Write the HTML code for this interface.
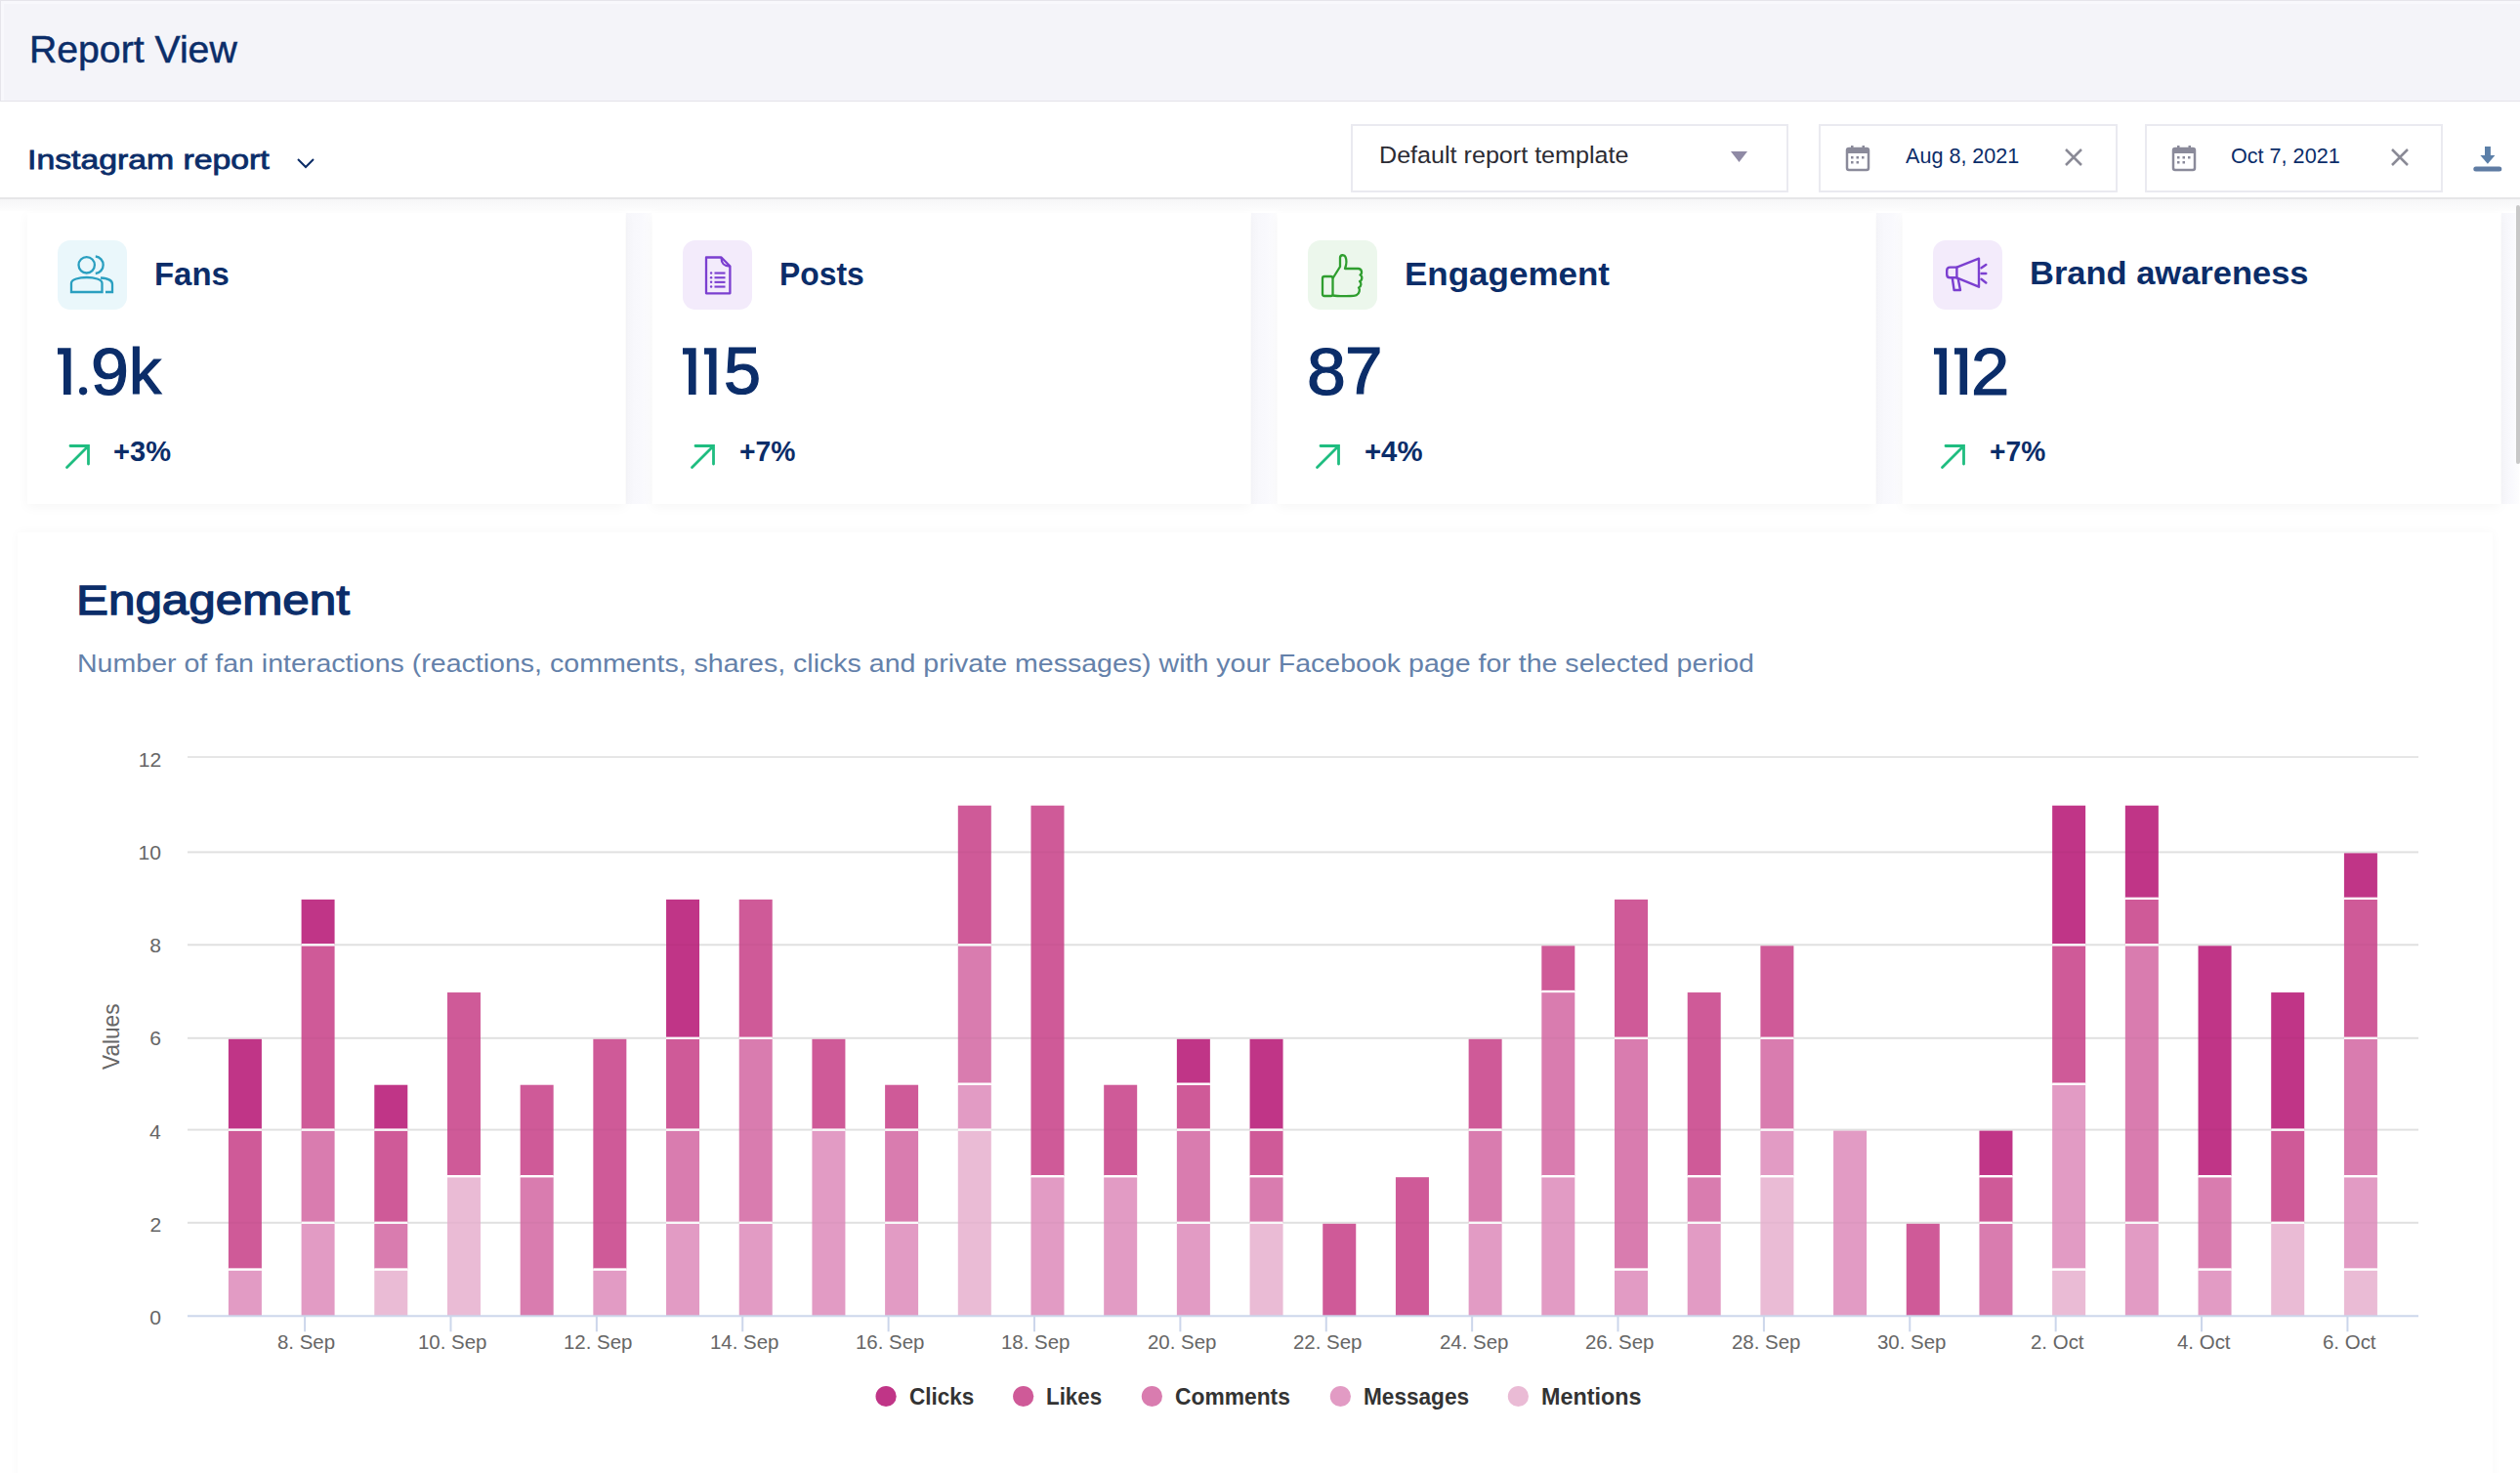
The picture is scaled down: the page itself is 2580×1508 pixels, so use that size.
<!DOCTYPE html><html><head><meta charset="utf-8"><style>
*{margin:0;padding:0;box-sizing:border-box}
html,body{width:2580px;height:1508px;overflow:hidden;background:#fff;font-family:"Liberation Sans",sans-serif}
.t{position:absolute;line-height:1;white-space:nowrap;transform-origin:0 0}
.a{position:absolute}
</style></head><body>

<div class="a" style="left:0;top:0;width:2580px;height:104px;background:#f4f4f9;border-top:1px solid #e6e5eb;border-left:1px solid #e6e5eb;border-bottom:1px solid #e4e3e9;box-shadow:inset 3px 3px 0 #f8f8fc"></div>
<div class="t" style="left:29.57px;top:32.06px;font-size:38.08px;color:#0b2d69;font-weight:400;transform:scaleX(1.0288);-webkit-text-stroke:0.5px #0b2d69;">Report View</div>

<div class="a" style="left:0;top:204px;width:2580px;height:12px;background:linear-gradient(#f6f6f7,#fdfdfd)"></div>
<div class="a" style="left:640.5px;top:218px;width:26px;height:298px;background:linear-gradient(90deg,#f7f7fb,#f9f9fd 60%,#fdfdfe)"></div>
<div class="a" style="left:1280.5px;top:218px;width:26px;height:298px;background:linear-gradient(90deg,#f7f7fb,#f9f9fd 60%,#fdfdfe)"></div>
<div class="a" style="left:1920.5px;top:218px;width:26px;height:298px;background:linear-gradient(90deg,#f7f7fb,#f9f9fd 60%,#fdfdfe)"></div>
<div class="a" style="left:2560.5px;top:218px;width:18px;height:298px;background:linear-gradient(90deg,#f7f7fb,#f9f9fd 60%,#fdfdfe)"></div>
<div class="a" style="left:0;top:202px;width:2580px;height:2px;background:#e6e6e8"></div>
<div class="t" style="left:28.06px;top:149.85px;font-size:28.05px;color:#0b2d69;font-weight:400;transform:scaleX(1.2038);-webkit-text-stroke:0.8px #0b2d69;">Instagram report</div>

<svg class="a" style="left:300px;top:158px" width="26" height="20"><path d="M5 5 L13 13 L21 5" fill="none" stroke="#0b2c66" stroke-width="2"/></svg>
<div class="a" style="left:1383px;top:127px;width:448px;height:70px;border:2px solid #eaeaf0;background:#fff"></div>
<div class="t" style="left:1411.79px;top:148.26px;font-size:23.55px;color:#2b2b33;font-weight:400;transform:scaleX(1.0666);">Default report template</div>

<svg class="a" style="left:1772px;top:155px" width="18" height="12"><path d="M0 0 L17 0 L8.5 11 Z" fill="#8f8aa5"/></svg>
<div class="a" style="left:1862px;top:127px;width:306px;height:70px;border:2px solid #eaeaf0;background:#fff"></div><svg class="a" style="left:1889px;top:148px" width="28" height="28"><rect x="2" y="4" width="22" height="22" rx="2" fill="none" stroke="#8a8a9a" stroke-width="2.5"/><rect x="2" y="4" width="22" height="5" fill="#8a8a9a"/><rect x="6" y="1" width="2.5" height="5" fill="#8a8a9a"/><rect x="17.5" y="1" width="2.5" height="5" fill="#8a8a9a"/><g fill="#8a8a9a"><rect x="6" y="12" width="2.5" height="2.5"/><rect x="11.5" y="12" width="2.5" height="2.5"/><rect x="17" y="12" width="2.5" height="2.5"/><rect x="6" y="17" width="2.5" height="2.5"/><rect x="11.5" y="17" width="2.5" height="2.5"/></g></svg><div class="t" style="left:1950.80px;top:149.09px;font-size:22.09px;color:#0b2d69;font-weight:400;transform:scaleX(0.9772);">Aug 8, 2021</div>
<svg class="a" style="left:2113px;top:151px" width="20" height="20"><path d="M2 2 L18 18 M18 2 L2 18" stroke="#8a8a96" stroke-width="2.5"/></svg>
<div class="a" style="left:2196px;top:127px;width:305px;height:70px;border:2px solid #eaeaf0;background:#fff"></div><svg class="a" style="left:2223px;top:148px" width="28" height="28"><rect x="2" y="4" width="22" height="22" rx="2" fill="none" stroke="#8a8a9a" stroke-width="2.5"/><rect x="2" y="4" width="22" height="5" fill="#8a8a9a"/><rect x="6" y="1" width="2.5" height="5" fill="#8a8a9a"/><rect x="17.5" y="1" width="2.5" height="5" fill="#8a8a9a"/><g fill="#8a8a9a"><rect x="6" y="12" width="2.5" height="2.5"/><rect x="11.5" y="12" width="2.5" height="2.5"/><rect x="17" y="12" width="2.5" height="2.5"/><rect x="6" y="17" width="2.5" height="2.5"/><rect x="11.5" y="17" width="2.5" height="2.5"/></g></svg><div class="t" style="left:2283.73px;top:149.09px;font-size:22.09px;color:#0b2d69;font-weight:400;transform:scaleX(0.9783);">Oct 7, 2021</div>
<svg class="a" style="left:2447px;top:151px" width="20" height="20"><path d="M2 2 L18 18 M18 2 L2 18" stroke="#8a8a96" stroke-width="2.5"/></svg>
<svg class="a" style="left:2530px;top:148px" width="34" height="30"><rect x="14" y="2" width="5.9" height="10" fill="#5b7fa8"/><path d="M9.4 11 L24.4 11 L16.9 19.8 Z" fill="#5b7fa8"/><rect x="2.3" y="22.4" width="29" height="5" rx="2.5" fill="#5f7ca3"/></svg>
<div class="a" style="left:27.8px;top:218px;width:612px;height:298px;background:#fff;box-shadow:0 3px 12px rgba(0,0,0,0.04)"></div>
<div class="a" style="left:58.8px;top:246px;width:71px;height:71px;border-radius:13px;background:#eaf7fb"><svg width="71" height="71" viewBox="0 0 71 71"><g fill="none" stroke="#2a9fc0" stroke-width="2.3"><circle cx="29.7" cy="25.3" r="8.2"/><path d="M38.8 16.5 A8.8 8.8 0 0 1 38.8 34"/><path d="M14 53 V44 C14 36 45.5 36 45.5 44 V53 Z"/><path d="M44 38.5 C52 39 56 41 56 45 V53 H49"/></g></svg></div>
<div class="t" style="left:157.86px;top:264.06px;font-size:32.99px;color:#0b2d69;font-weight:700;transform:scaleX(0.9976);">Fans</div>

<svg class="a" style="left:58.00px;top:355px" width="15.60" height="52"><path d="M1 1.3 H14.60 V49.1 H7.00 V7.8 H1 Z" fill="#0b2d69"/></svg>
<svg class="a" style="left:80.70px;top:395px" width="10" height="10"><circle cx="4.10" cy="5.3" r="4.1" fill="#0b2d69"/></svg>
<div class="t" style="left:92.85px;top:346.28px;font-size:68.29px;color:#0b2d69;font-weight:400;transform:scaleX(1.0235);-webkit-text-stroke:1.2px #0b2d69;">9</div>

<div class="t" style="left:132.40px;top:348.28px;font-size:65.93px;color:#0b2d69;font-weight:400;transform:scaleX(1.0042);-webkit-text-stroke:1.2px #0b2d69;">k</div>

<svg class="a" style="left:65.8px;top:453px" width="28" height="28"><path d="M2.5 25.5 L24 4 M6 3.5 H24.5 V22" fill="none" stroke="#1fbd80" stroke-width="2.8" stroke-linecap="round"/></svg>
<div class="t" style="left:115.94px;top:448.36px;font-size:29.22px;color:#0b2d69;font-weight:700;transform:scaleX(0.9946);">+3%</div>

<div class="a" style="left:667.5px;top:218px;width:612px;height:298px;background:#fff;box-shadow:0 3px 12px rgba(0,0,0,0.04)"></div>
<div class="a" style="left:698.5px;top:246px;width:71px;height:71px;border-radius:13px;background:#f3ebfb"><svg width="71" height="71" viewBox="0 0 71 71"><g fill="none" stroke="#7b3fd0" stroke-width="2.3" stroke-linejoin="round"><path d="M24 17.5 H39.5 L48.4 26.5 V54.3 H24 Z"/><path d="M39.5 17.5 C39.5 23 41 26.5 48.4 26.5"/></g><g fill="#7b3fd0"><circle cx="29.1" cy="33.5" r="1.2"/><circle cx="29.1" cy="38.2" r="1.2"/><circle cx="29.1" cy="42.8" r="1.2"/><circle cx="29.1" cy="47.5" r="1.2"/><rect x="32.5" y="32.5" width="11" height="2.1"/><rect x="32.5" y="37.2" width="11" height="2.1"/><rect x="32.5" y="41.8" width="11" height="2.1"/><rect x="32.5" y="46.5" width="11" height="2.1"/></g></svg></div>
<div class="t" style="left:798.43px;top:263.72px;font-size:33.28px;color:#0b2d69;font-weight:700;transform:scaleX(0.9570);">Posts</div>

<svg class="a" style="left:698.00px;top:355px" width="15.60" height="52"><path d="M1 1.3 H14.60 V49.1 H7.00 V7.8 H1 Z" fill="#0b2d69"/></svg>
<svg class="a" style="left:719.70px;top:355px" width="14.50" height="52"><path d="M1 1.3 H13.50 V49.1 H5.90 V7.8 H1 Z" fill="#0b2d69"/></svg>
<div class="t" style="left:740.86px;top:345.44px;font-size:69.28px;color:#0b2d69;font-weight:400;transform:scaleX(0.9877);-webkit-text-stroke:1.2px #0b2d69;">5</div>

<svg class="a" style="left:705.5px;top:453px" width="28" height="28"><path d="M2.5 25.5 L24 4 M6 3.5 H24.5 V22" fill="none" stroke="#1fbd80" stroke-width="2.8" stroke-linecap="round"/></svg>
<div class="t" style="left:756.87px;top:448.36px;font-size:29.22px;color:#0b2d69;font-weight:700;transform:scaleX(0.9685);">+7%</div>

<div class="a" style="left:1307.5px;top:218px;width:612px;height:298px;background:#fff;box-shadow:0 3px 12px rgba(0,0,0,0.04)"></div>
<div class="a" style="left:1338.5px;top:246px;width:71px;height:71px;border-radius:13px;background:#ecf7ec"><svg width="71" height="71" viewBox="0 0 71 71"><g fill="none" stroke="#2f9e2f" stroke-width="2.3" stroke-linejoin="round"><rect x="15" y="37" width="10.5" height="20" rx="2"/><path d="M25.5 39 L33 27 V18 C33 14.5 37.5 14.5 38.5 17 C40 20.5 39.5 25 38 29 H51.5 C55.5 29 56 34 53.5 35.5 C56 36.5 56 41 53 42 C55 43.5 55 47.5 52 48.5 C53.5 50 53 54.5 50 56 C48 57.5 31 57.5 25.5 56.5"/></g></svg></div>
<div class="t" style="left:1438.32px;top:263.86px;font-size:32.99px;color:#0b2d69;font-weight:700;transform:scaleX(1.0609);">Engagement</div>

<div class="t" style="left:1338.07px;top:346.28px;font-size:68.29px;color:#0b2d69;font-weight:400;transform:scaleX(1.0500);-webkit-text-stroke:1.2px #0b2d69;">8</div>

<div class="t" style="left:1376.94px;top:345.44px;font-size:69.28px;color:#0b2d69;font-weight:400;transform:scaleX(0.9994);-webkit-text-stroke:1.2px #0b2d69;">7</div>

<svg class="a" style="left:1345.5px;top:453px" width="28" height="28"><path d="M2.5 25.5 L24 4 M6 3.5 H24.5 V22" fill="none" stroke="#1fbd80" stroke-width="2.8" stroke-linecap="round"/></svg>
<div class="t" style="left:1397.13px;top:448.36px;font-size:29.22px;color:#0b2d69;font-weight:700;transform:scaleX(1.0033);">+4%</div>

<div class="a" style="left:1948.0px;top:218px;width:612px;height:298px;background:#fff;box-shadow:0 3px 12px rgba(0,0,0,0.04)"></div>
<div class="a" style="left:1979.0px;top:246px;width:71px;height:71px;border-radius:13px;background:#f3ebfb"><svg width="71" height="71" viewBox="0 0 71 71"><g fill="none" stroke="#7b3fd0" stroke-width="2.4" stroke-linejoin="round" stroke-linecap="round"><path d="M24.4 27.6 L47 18.7 V47.7 L24.4 38.3 Z"/><path d="M24.4 27.6 H17.5 C15 27.6 14.2 29 14.2 31 V35 C14.2 37 15 38.3 17.5 38.3 H24.4"/><path d="M19.8 38.5 L21.6 51 H28 L25.8 39.8"/><path d="M49.5 28.3 L54.3 25 M49.5 34 H54.3 M49.5 39.8 L54.3 43.5"/></g></svg></div>
<div class="t" style="left:2078.06px;top:263.03px;font-size:33.87px;color:#0b2d69;font-weight:700;transform:scaleX(1.0182);">Brand awareness</div>

<svg class="a" style="left:1978.70px;top:355px" width="15.00" height="52"><path d="M1 1.3 H14.00 V49.1 H6.40 V7.8 H1 Z" fill="#0b2d69"/></svg>
<svg class="a" style="left:1999.80px;top:355px" width="15.10" height="52"><path d="M1 1.3 H14.10 V49.1 H6.50 V7.8 H1 Z" fill="#0b2d69"/></svg>
<div class="t" style="left:2018.47px;top:346.28px;font-size:68.29px;color:#0b2d69;font-weight:400;transform:scaleX(1.0332);-webkit-text-stroke:1.2px #0b2d69;">2</div>

<svg class="a" style="left:1986.0px;top:453px" width="28" height="28"><path d="M2.5 25.5 L24 4 M6 3.5 H24.5 V22" fill="none" stroke="#1fbd80" stroke-width="2.8" stroke-linecap="round"/></svg>
<div class="t" style="left:2037.17px;top:448.36px;font-size:29.22px;color:#0b2d69;font-weight:700;transform:scaleX(0.9650);">+7%</div>

<div class="a" style="left:18px;top:545px;width:2534px;height:1000px;background:#fff;box-shadow:0 0 10px rgba(0,0,0,0.03)"></div>
<div class="t" style="left:78.45px;top:593.25px;font-size:43.17px;color:#0b2d69;font-weight:400;transform:scaleX(1.1439);-webkit-text-stroke:1.3px #0b2d69;">Engagement</div>

<div class="t" style="left:79.02px;top:666.53px;font-size:25.00px;color:#6481aa;font-weight:400;transform:scaleX(1.1420);">Number of fan interactions (reactions, comments, shares, clicks and private messages) with your Facebook page for the selected period</div>

<svg class="a" style="left:0;top:0" width="2580" height="1508">
<rect x="192" y="1250.80" width="2284" height="2" fill="#e6e6e6"/>
<rect x="192" y="1155.60" width="2284" height="2" fill="#e6e6e6"/>
<rect x="192" y="1061.80" width="2284" height="2" fill="#e6e6e6"/>
<rect x="192" y="966.30" width="2284" height="2" fill="#e6e6e6"/>
<rect x="192" y="871.40" width="2284" height="2" fill="#e6e6e6"/>
<rect x="192" y="774.00" width="2284" height="2" fill="#e6e6e6"/>
<rect x="233.90" y="1300.55" width="34" height="46.75" fill="#e29bc4"/>
<rect x="233.90" y="1157.60" width="34" height="141.95" fill="#cf5a98"/>
<rect x="233.90" y="1298.35" width="34" height="2.3" fill="#ffffff"/>
<rect x="233.90" y="1063.80" width="34" height="92.80" fill="#c03587"/>
<rect x="233.90" y="1155.40" width="34" height="2.3" fill="#ffffff"/>
<rect x="308.59" y="1252.80" width="34" height="94.50" fill="#e29bc4"/>
<rect x="308.59" y="1157.60" width="34" height="94.20" fill="#d97caf"/>
<rect x="308.59" y="1250.60" width="34" height="2.3" fill="#ffffff"/>
<rect x="308.59" y="968.30" width="34" height="188.30" fill="#cf5a98"/>
<rect x="308.59" y="1155.40" width="34" height="2.3" fill="#ffffff"/>
<rect x="308.59" y="920.85" width="34" height="46.45" fill="#c03587"/>
<rect x="308.59" y="966.10" width="34" height="2.3" fill="#ffffff"/>
<rect x="383.28" y="1300.55" width="34" height="46.75" fill="#eabbd5"/>
<rect x="383.28" y="1252.80" width="34" height="46.75" fill="#d97caf"/>
<rect x="383.28" y="1298.35" width="34" height="2.3" fill="#ffffff"/>
<rect x="383.28" y="1157.60" width="34" height="94.20" fill="#cf5a98"/>
<rect x="383.28" y="1250.60" width="34" height="2.3" fill="#ffffff"/>
<rect x="383.28" y="1110.70" width="34" height="45.90" fill="#c03587"/>
<rect x="383.28" y="1155.40" width="34" height="2.3" fill="#ffffff"/>
<rect x="457.97" y="1205.20" width="34" height="142.10" fill="#eabbd5"/>
<rect x="457.97" y="1016.05" width="34" height="188.15" fill="#cf5a98"/>
<rect x="457.97" y="1203.00" width="34" height="2.3" fill="#ffffff"/>
<rect x="532.66" y="1205.20" width="34" height="142.10" fill="#d97caf"/>
<rect x="532.66" y="1110.70" width="34" height="93.50" fill="#cf5a98"/>
<rect x="532.66" y="1203.00" width="34" height="2.3" fill="#ffffff"/>
<rect x="607.35" y="1300.55" width="34" height="46.75" fill="#e29bc4"/>
<rect x="607.35" y="1063.80" width="34" height="235.75" fill="#cf5a98"/>
<rect x="607.35" y="1298.35" width="34" height="2.3" fill="#ffffff"/>
<rect x="682.04" y="1252.80" width="34" height="94.50" fill="#e29bc4"/>
<rect x="682.04" y="1157.60" width="34" height="94.20" fill="#d97caf"/>
<rect x="682.04" y="1250.60" width="34" height="2.3" fill="#ffffff"/>
<rect x="682.04" y="1063.80" width="34" height="92.80" fill="#cf5a98"/>
<rect x="682.04" y="1155.40" width="34" height="2.3" fill="#ffffff"/>
<rect x="682.04" y="920.85" width="34" height="141.95" fill="#c03587"/>
<rect x="682.04" y="1061.60" width="34" height="2.3" fill="#ffffff"/>
<rect x="756.73" y="1252.80" width="34" height="94.50" fill="#e29bc4"/>
<rect x="756.73" y="1063.80" width="34" height="188.00" fill="#d97caf"/>
<rect x="756.73" y="1250.60" width="34" height="2.3" fill="#ffffff"/>
<rect x="756.73" y="920.85" width="34" height="141.95" fill="#cf5a98"/>
<rect x="756.73" y="1061.60" width="34" height="2.3" fill="#ffffff"/>
<rect x="831.42" y="1157.60" width="34" height="189.70" fill="#e29bc4"/>
<rect x="831.42" y="1063.80" width="34" height="92.80" fill="#cf5a98"/>
<rect x="831.42" y="1155.40" width="34" height="2.3" fill="#ffffff"/>
<rect x="906.11" y="1252.80" width="34" height="94.50" fill="#e29bc4"/>
<rect x="906.11" y="1157.60" width="34" height="94.20" fill="#d97caf"/>
<rect x="906.11" y="1250.60" width="34" height="2.3" fill="#ffffff"/>
<rect x="906.11" y="1110.70" width="34" height="45.90" fill="#cf5a98"/>
<rect x="906.11" y="1155.40" width="34" height="2.3" fill="#ffffff"/>
<rect x="980.80" y="1157.60" width="34" height="189.70" fill="#eabbd5"/>
<rect x="980.80" y="1110.70" width="34" height="45.90" fill="#e29bc4"/>
<rect x="980.80" y="1155.40" width="34" height="2.3" fill="#ffffff"/>
<rect x="980.80" y="968.30" width="34" height="141.40" fill="#d97caf"/>
<rect x="980.80" y="1108.50" width="34" height="2.3" fill="#ffffff"/>
<rect x="980.80" y="824.70" width="34" height="142.60" fill="#cf5a98"/>
<rect x="980.80" y="966.10" width="34" height="2.3" fill="#ffffff"/>
<rect x="1055.49" y="1205.20" width="34" height="142.10" fill="#e29bc4"/>
<rect x="1055.49" y="824.70" width="34" height="379.50" fill="#cf5a98"/>
<rect x="1055.49" y="1203.00" width="34" height="2.3" fill="#ffffff"/>
<rect x="1130.18" y="1205.20" width="34" height="142.10" fill="#e29bc4"/>
<rect x="1130.18" y="1110.70" width="34" height="93.50" fill="#cf5a98"/>
<rect x="1130.18" y="1203.00" width="34" height="2.3" fill="#ffffff"/>
<rect x="1204.87" y="1252.80" width="34" height="94.50" fill="#e29bc4"/>
<rect x="1204.87" y="1157.60" width="34" height="94.20" fill="#d97caf"/>
<rect x="1204.87" y="1250.60" width="34" height="2.3" fill="#ffffff"/>
<rect x="1204.87" y="1110.70" width="34" height="45.90" fill="#cf5a98"/>
<rect x="1204.87" y="1155.40" width="34" height="2.3" fill="#ffffff"/>
<rect x="1204.87" y="1063.80" width="34" height="45.90" fill="#c03587"/>
<rect x="1204.87" y="1108.50" width="34" height="2.3" fill="#ffffff"/>
<rect x="1279.56" y="1252.80" width="34" height="94.50" fill="#eabbd5"/>
<rect x="1279.56" y="1205.20" width="34" height="46.60" fill="#d97caf"/>
<rect x="1279.56" y="1250.60" width="34" height="2.3" fill="#ffffff"/>
<rect x="1279.56" y="1157.60" width="34" height="46.60" fill="#cf5a98"/>
<rect x="1279.56" y="1203.00" width="34" height="2.3" fill="#ffffff"/>
<rect x="1279.56" y="1063.80" width="34" height="92.80" fill="#c03587"/>
<rect x="1279.56" y="1155.40" width="34" height="2.3" fill="#ffffff"/>
<rect x="1354.25" y="1252.80" width="34" height="94.50" fill="#cf5a98"/>
<rect x="1428.94" y="1205.20" width="34" height="142.10" fill="#cf5a98"/>
<rect x="1503.63" y="1252.80" width="34" height="94.50" fill="#e29bc4"/>
<rect x="1503.63" y="1157.60" width="34" height="94.20" fill="#d97caf"/>
<rect x="1503.63" y="1250.60" width="34" height="2.3" fill="#ffffff"/>
<rect x="1503.63" y="1063.80" width="34" height="92.80" fill="#cf5a98"/>
<rect x="1503.63" y="1155.40" width="34" height="2.3" fill="#ffffff"/>
<rect x="1578.32" y="1205.20" width="34" height="142.10" fill="#e29bc4"/>
<rect x="1578.32" y="1016.05" width="34" height="188.15" fill="#d97caf"/>
<rect x="1578.32" y="1203.00" width="34" height="2.3" fill="#ffffff"/>
<rect x="1578.32" y="968.30" width="34" height="46.75" fill="#cf5a98"/>
<rect x="1578.32" y="1013.85" width="34" height="2.3" fill="#ffffff"/>
<rect x="1653.01" y="1300.55" width="34" height="46.75" fill="#e29bc4"/>
<rect x="1653.01" y="1063.80" width="34" height="235.75" fill="#d97caf"/>
<rect x="1653.01" y="1298.35" width="34" height="2.3" fill="#ffffff"/>
<rect x="1653.01" y="920.85" width="34" height="141.95" fill="#cf5a98"/>
<rect x="1653.01" y="1061.60" width="34" height="2.3" fill="#ffffff"/>
<rect x="1727.70" y="1252.80" width="34" height="94.50" fill="#e29bc4"/>
<rect x="1727.70" y="1205.20" width="34" height="46.60" fill="#d97caf"/>
<rect x="1727.70" y="1250.60" width="34" height="2.3" fill="#ffffff"/>
<rect x="1727.70" y="1016.05" width="34" height="188.15" fill="#cf5a98"/>
<rect x="1727.70" y="1203.00" width="34" height="2.3" fill="#ffffff"/>
<rect x="1802.39" y="1205.20" width="34" height="142.10" fill="#eabbd5"/>
<rect x="1802.39" y="1157.60" width="34" height="46.60" fill="#e29bc4"/>
<rect x="1802.39" y="1203.00" width="34" height="2.3" fill="#ffffff"/>
<rect x="1802.39" y="1063.80" width="34" height="92.80" fill="#d97caf"/>
<rect x="1802.39" y="1155.40" width="34" height="2.3" fill="#ffffff"/>
<rect x="1802.39" y="968.30" width="34" height="94.50" fill="#cf5a98"/>
<rect x="1802.39" y="1061.60" width="34" height="2.3" fill="#ffffff"/>
<rect x="1877.08" y="1157.60" width="34" height="189.70" fill="#e29bc4"/>
<rect x="1951.77" y="1252.80" width="34" height="94.50" fill="#cf5a98"/>
<rect x="2026.46" y="1252.80" width="34" height="94.50" fill="#d97caf"/>
<rect x="2026.46" y="1205.20" width="34" height="46.60" fill="#cf5a98"/>
<rect x="2026.46" y="1250.60" width="34" height="2.3" fill="#ffffff"/>
<rect x="2026.46" y="1157.60" width="34" height="46.60" fill="#c03587"/>
<rect x="2026.46" y="1203.00" width="34" height="2.3" fill="#ffffff"/>
<rect x="2101.15" y="1300.55" width="34" height="46.75" fill="#eabbd5"/>
<rect x="2101.15" y="1110.70" width="34" height="188.85" fill="#e29bc4"/>
<rect x="2101.15" y="1298.35" width="34" height="2.3" fill="#ffffff"/>
<rect x="2101.15" y="968.30" width="34" height="141.40" fill="#cf5a98"/>
<rect x="2101.15" y="1108.50" width="34" height="2.3" fill="#ffffff"/>
<rect x="2101.15" y="824.70" width="34" height="142.60" fill="#c03587"/>
<rect x="2101.15" y="966.10" width="34" height="2.3" fill="#ffffff"/>
<rect x="2175.84" y="1252.80" width="34" height="94.50" fill="#e29bc4"/>
<rect x="2175.84" y="968.30" width="34" height="283.50" fill="#d97caf"/>
<rect x="2175.84" y="1250.60" width="34" height="2.3" fill="#ffffff"/>
<rect x="2175.84" y="920.85" width="34" height="46.45" fill="#cf5a98"/>
<rect x="2175.84" y="966.10" width="34" height="2.3" fill="#ffffff"/>
<rect x="2175.84" y="824.70" width="34" height="95.15" fill="#c03587"/>
<rect x="2175.84" y="918.65" width="34" height="2.3" fill="#ffffff"/>
<rect x="2250.53" y="1300.55" width="34" height="46.75" fill="#e29bc4"/>
<rect x="2250.53" y="1205.20" width="34" height="94.35" fill="#d97caf"/>
<rect x="2250.53" y="1298.35" width="34" height="2.3" fill="#ffffff"/>
<rect x="2250.53" y="968.30" width="34" height="235.90" fill="#c03587"/>
<rect x="2250.53" y="1203.00" width="34" height="2.3" fill="#ffffff"/>
<rect x="2325.22" y="1252.80" width="34" height="94.50" fill="#eabbd5"/>
<rect x="2325.22" y="1157.60" width="34" height="94.20" fill="#cf5a98"/>
<rect x="2325.22" y="1250.60" width="34" height="2.3" fill="#ffffff"/>
<rect x="2325.22" y="1016.05" width="34" height="140.55" fill="#c03587"/>
<rect x="2325.22" y="1155.40" width="34" height="2.3" fill="#ffffff"/>
<rect x="2399.91" y="1300.55" width="34" height="46.75" fill="#eabbd5"/>
<rect x="2399.91" y="1205.20" width="34" height="94.35" fill="#e29bc4"/>
<rect x="2399.91" y="1298.35" width="34" height="2.3" fill="#ffffff"/>
<rect x="2399.91" y="1063.80" width="34" height="140.40" fill="#d97caf"/>
<rect x="2399.91" y="1203.00" width="34" height="2.3" fill="#ffffff"/>
<rect x="2399.91" y="920.85" width="34" height="141.95" fill="#cf5a98"/>
<rect x="2399.91" y="1061.60" width="34" height="2.3" fill="#ffffff"/>
<rect x="2399.91" y="873.40" width="34" height="46.45" fill="#c03587"/>
<rect x="2399.91" y="918.65" width="34" height="2.3" fill="#ffffff"/>
<rect x="192" y="1250.80" width="2284" height="2" fill="#000" fill-opacity="0.025"/>
<rect x="192" y="1155.60" width="2284" height="2" fill="#000" fill-opacity="0.025"/>
<rect x="192" y="1061.80" width="2284" height="2" fill="#000" fill-opacity="0.025"/>
<rect x="192" y="966.30" width="2284" height="2" fill="#000" fill-opacity="0.025"/>
<rect x="192" y="871.40" width="2284" height="2" fill="#000" fill-opacity="0.025"/>
<rect x="192" y="1346.30" width="2284" height="2" fill="#ccd6eb"/>
<rect x="311.10" y="1347.30" width="2" height="16" fill="#ccd6eb"/>
<rect x="460.48" y="1347.30" width="2" height="16" fill="#ccd6eb"/>
<rect x="609.86" y="1347.30" width="2" height="16" fill="#ccd6eb"/>
<rect x="759.24" y="1347.30" width="2" height="16" fill="#ccd6eb"/>
<rect x="908.62" y="1347.30" width="2" height="16" fill="#ccd6eb"/>
<rect x="1058.00" y="1347.30" width="2" height="16" fill="#ccd6eb"/>
<rect x="1207.38" y="1347.30" width="2" height="16" fill="#ccd6eb"/>
<rect x="1356.76" y="1347.30" width="2" height="16" fill="#ccd6eb"/>
<rect x="1506.14" y="1347.30" width="2" height="16" fill="#ccd6eb"/>
<rect x="1655.52" y="1347.30" width="2" height="16" fill="#ccd6eb"/>
<rect x="1804.90" y="1347.30" width="2" height="16" fill="#ccd6eb"/>
<rect x="1954.28" y="1347.30" width="2" height="16" fill="#ccd6eb"/>
<rect x="2103.66" y="1347.30" width="2" height="16" fill="#ccd6eb"/>
<rect x="2253.04" y="1347.30" width="2" height="16" fill="#ccd6eb"/>
<rect x="2402.42" y="1347.30" width="2" height="16" fill="#ccd6eb"/>
<circle cx="907.1" cy="1429.5" r="10.6" fill="#c03587"/>
<circle cx="1047.7" cy="1429.5" r="10.6" fill="#cf5a98"/>
<circle cx="1179.4" cy="1429.5" r="10.6" fill="#d97caf"/>
<circle cx="1372.4" cy="1429.5" r="10.6" fill="#e29bc4"/>
<circle cx="1554.4" cy="1429.5" r="10.6" fill="#eabbd5"/>
</svg>
<div class="t" style="left:284.48px;top:1364.15px;font-size:20.14px;color:#666666;font-weight:400;transform:scaleX(1.0159)">8. Sep</div>

<div class="t" style="left:427.87px;top:1364.15px;font-size:20.14px;color:#666666;font-weight:400;transform:scaleX(1.0159)">10. Sep</div>

<div class="t" style="left:577.25px;top:1364.15px;font-size:20.14px;color:#666666;font-weight:400;transform:scaleX(1.0159)">12. Sep</div>

<div class="t" style="left:726.63px;top:1364.15px;font-size:20.14px;color:#666666;font-weight:400;transform:scaleX(1.0159)">14. Sep</div>

<div class="t" style="left:876.01px;top:1364.15px;font-size:20.14px;color:#666666;font-weight:400;transform:scaleX(1.0159)">16. Sep</div>

<div class="t" style="left:1025.39px;top:1364.15px;font-size:20.14px;color:#666666;font-weight:400;transform:scaleX(1.0159)">18. Sep</div>

<div class="t" style="left:1175.03px;top:1364.15px;font-size:20.14px;color:#666666;font-weight:400;transform:scaleX(1.0159)">20. Sep</div>

<div class="t" style="left:1324.41px;top:1364.15px;font-size:20.14px;color:#666666;font-weight:400;transform:scaleX(1.0159)">22. Sep</div>

<div class="t" style="left:1473.79px;top:1364.15px;font-size:20.14px;color:#666666;font-weight:400;transform:scaleX(1.0159)">24. Sep</div>

<div class="t" style="left:1623.17px;top:1364.15px;font-size:20.14px;color:#666666;font-weight:400;transform:scaleX(1.0159)">26. Sep</div>

<div class="t" style="left:1772.55px;top:1364.15px;font-size:20.14px;color:#666666;font-weight:400;transform:scaleX(1.0159)">28. Sep</div>

<div class="t" style="left:1922.03px;top:1364.15px;font-size:20.14px;color:#666666;font-weight:400;transform:scaleX(1.0159)">30. Sep</div>

<div class="t" style="left:2078.93px;top:1364.15px;font-size:20.14px;color:#666666;font-weight:400;transform:scaleX(1.0159)">2. Oct</div>

<div class="t" style="left:2228.62px;top:1364.15px;font-size:20.14px;color:#666666;font-weight:400;transform:scaleX(1.0159)">4. Oct</div>

<div class="t" style="left:2377.69px;top:1364.15px;font-size:20.14px;color:#666666;font-weight:400;transform:scaleX(1.0159)">6. Oct</div>

<div class="t" style="left:153.21px;top:1337.90px;font-size:21.14px;color:#666666;font-weight:400;transform:scaleX(1.0000)">0</div>

<div class="t" style="left:153.52px;top:1242.74px;font-size:21.14px;color:#666666;font-weight:400;transform:scaleX(1.0000)">2</div>

<div class="t" style="left:152.99px;top:1147.58px;font-size:21.14px;color:#666666;font-weight:400;transform:scaleX(1.0000)">4</div>

<div class="t" style="left:153.31px;top:1052.42px;font-size:21.14px;color:#666666;font-weight:400;transform:scaleX(1.0000)">6</div>

<div class="t" style="left:153.31px;top:957.26px;font-size:21.14px;color:#666666;font-weight:400;transform:scaleX(1.0000)">8</div>

<div class="t" style="left:141.47px;top:862.10px;font-size:21.14px;color:#666666;font-weight:400;transform:scaleX(1.0000)">10</div>

<div class="t" style="left:141.79px;top:766.94px;font-size:21.14px;color:#666666;font-weight:400;transform:scaleX(1.0000)">12</div>

<div class="t" style="left:103.46px;top:1095.01px;font-size:23.32px;color:#666;transform:rotate(-90deg) scaleX(0.9698)">Values</div>
<div class="t" style="left:930.70px;top:1418.02px;font-size:23.84px;color:#333333;font-weight:700;transform:scaleX(0.9445);">Clicks</div>

<div class="t" style="left:1071.45px;top:1418.02px;font-size:23.84px;color:#333333;font-weight:700;transform:scaleX(0.9366);">Likes</div>

<div class="t" style="left:1203.29px;top:1418.02px;font-size:23.84px;color:#333333;font-weight:700;transform:scaleX(0.9570);">Comments</div>

<div class="t" style="left:1395.63px;top:1418.02px;font-size:23.84px;color:#333333;font-weight:700;transform:scaleX(0.9485);">Messages</div>

<div class="t" style="left:1577.88px;top:1418.02px;font-size:23.84px;color:#333333;font-weight:700;transform:scaleX(0.9790);">Mentions</div>

<div class="a" style="left:2576px;top:210px;width:4px;height:265px;border-radius:2px;background:#c8c8c8"></div>
</body></html>
